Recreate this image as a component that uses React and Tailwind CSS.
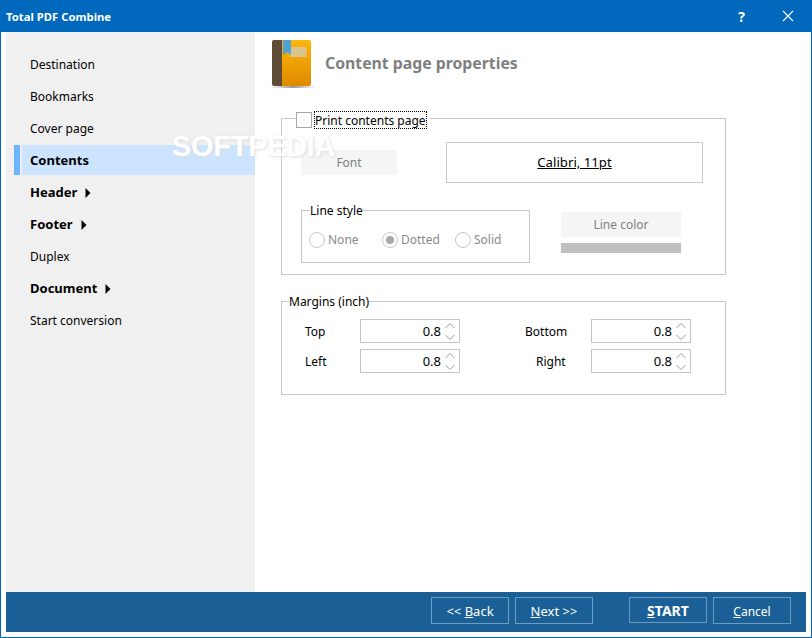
const nav = [
  { t: "Destination" },
  { t: "Bookmarks" },
  { t: "Cover page" },
  { t: "Contents", b: true, sel: true },
  { t: "Header", b: true, arrow: true },
  { t: "Footer", b: true, arrow: true },
  { t: "Duplex" },
  { t: "Document", b: true, arrow: true },
  { t: "Start conversion" },
];

function NavItem({ t, b, sel, arrow }) {
  return (
    <div className="h-8 flex items-center">
      <div className={sel ? "w-[6px] h-[30px] bg-[#6db5ff] mr-[2px] ml-[8px]" : "w-[16px]"} />
      <div className={`flex-1 h-[30px] flex items-center pl-2 pt-px ${sel ? "bg-[#cce4ff]" : ""} ${b ? "font-bold text-[13px]" : ""}`}>
        <span>{t}</span>
        {arrow && (
          <svg width="6" height="10" viewBox="0 0 6 10" className="ml-2">
            <path d="M0.5 0 L5.5 5 L0.5 10 Z" fill="#000" />
          </svg>
        )}
      </div>
    </div>
  );
}

function Radio({ label, on, className }) {
  return (
    <div className={`flex items-center gap-[3px] text-[#8a8a8a] ${className || ""}`}>
      <div className="w-4 h-4 rounded-full border border-[#c8c8c8] bg-white flex items-center justify-center">
        {on && <div className="w-2 h-2 rounded-full bg-[#a8a8a8]" />}
      </div>
      <span className="pt-px">{label}</span>
    </div>
  );
}

function Spin({ className }) {
  return (
    <div className={`w-[100px] h-6 border border-[#c4c4c4] bg-white flex items-center justify-end ${className || ""}`}>
      <span className="mr-[3px] pt-px text-[13px]">0.8</span>
      <svg width="12" height="22" viewBox="0 0 12 22" className="mr-[3px]">
        <path d="M1.5 8 L6 3.5 L10.5 8" fill="none" stroke="#9a9a9a" strokeWidth="1" />
        <path d="M1.5 15 L6 19.5 L10.5 15" fill="none" stroke="#9a9a9a" strokeWidth="1" />
      </svg>
    </div>
  );
}

function BookIcon() {
  return (
    <svg width="48" height="50" viewBox="0 0 48 50" className="block">
      <defs>
        <linearGradient id="g" x1="0" y1="0" x2="0" y2="1">
          <stop offset="0" stopColor="#fdb70a" />
          <stop offset="1" stopColor="#de8a00" />
        </linearGradient>
        <linearGradient id="s" x1="0" y1="0" x2="1" y2="0">
          <stop offset="0" stopColor="#00000000" />
          <stop offset="0.5" stopColor="#00000066" />
          <stop offset="1" stopColor="#00000000" />
        </linearGradient>
      </defs>
      <rect x="0" y="46" width="46" height="2" fill="url(#s)" />
      <path d="M4 0 H12 V46 H4 Q2 46 2 44 V2 Q2 0 4 0 Z" fill="#5e4c35" />
      <path d="M12 0 H39 Q41 0 41 2 V44 Q41 46 39 46 H12 Z" fill="url(#g)" />
      <path d="M13 0 H21 V15 L17 12 L13 15 Z" fill="#4da3d6" />
      <path d="M21 7 H35 Q36.500 7 36.500 8.500 V17 H19 L21 14 Z" fill="#dcc48e" />
    </svg>
  );
}

const FooterBtn = ({ children, className }) => (
  <div className={`w-[78px] border border-[#6c9cc0] flex items-center justify-center text-white ${className || ""}`}>
    {children}
  </div>
);

export default function App() {
  return (
    <div className="relative w-[812px] h-[638px] flex flex-col bg-white overflow-hidden border-x border-b border-[#0069bd] text-[12px] text-black font-['Noto_Sans',sans-serif]">
      <div className="h-8 -mx-px bg-[#0069bd] flex items-center text-white shrink-0">
        <span className="ml-[6px] pt-[3px] font-bold text-[11.3px]">Total PDF Combine</span>
        <span className="ml-auto mr-[37px] font-bold text-[14px]">?</span>
        <svg width="12" height="12" viewBox="0 0 12 12" className="mr-[18px]">
          <path d="M1 1 L11 11 M11 1 L1 11" stroke="#fff" strokeWidth="1.2" />
        </svg>
      </div>

      <div className="flex-1 flex pl-[5px] min-h-0">
        <div className="w-[249px] bg-[#f0f0f0] pt-4 shrink-0">
          {nav.map((n) => <NavItem key={n.t} {...n} />)}
        </div>
        <div className="flex-1 pl-[26px]">
          <div className="h-[78px] flex items-start pt-2 -ml-[11px]">
            <BookIcon />
            <span className="ml-[7px] mt-[12px] text-[15.8px] font-bold text-[#7f7f7f]">Content page properties</span>
          </div>

          <fieldset className="w-[445px] h-[165px] border border-[#c8c8c8]">
            <legend className="ml-[14px] h-4 flex items-start pr-[3px]">
              <div className="w-4 h-4 mt-[2px] border border-[#a8a8a8] bg-white" />
              <span className="h-[18px] ml-[2px] mt-[1px] pt-px flex items-center border border-dotted border-black leading-none">Print contents page</span>
            </legend>
            <div className="px-[19px]">
              <div className="flex items-center mt-[16px]">
                <div className="w-24 h-[25px] pt-px bg-[#f5f5f5] text-[#808080] flex items-center justify-center">Font</div>
                <div className="ml-[49px] w-[257px] h-[41px] pt-px border border-[#c8c8c8] flex items-center justify-center underline text-[13.2px]">Calibri, 11pt</div>
              </div>
              <div className="flex mt-[19px]">
                <fieldset className="w-[229px] h-[61px] border border-[#c8c8c8] px-[7px]">
                  <legend className="ml-[1px] leading-4 pt-px">Line style</legend>
                  <div className="flex items-center mt-[11px]">
                    <Radio label="None" className="w-[73px]" />
                    <Radio label="Dotted" on className="w-[73px]" />
                    <Radio label="Solid" />
                  </div>
                </fieldset>
                <div className="ml-[31px] w-[120px] mt-[10px]">
                  <div className="h-[25px] pt-px bg-[#f5f5f5] text-[#808080] flex items-center justify-center">Line color</div>
                  <div className="h-[10px] mt-[6px] bg-[#c0c0c0]" />
                </div>
              </div>
            </div>
          </fieldset>

          <fieldset className="w-[445px] h-[102px] mt-[18px] border border-[#c8c8c8]">
            <legend className="ml-[7px] leading-4 pt-px">Margins (inch)</legend>
            <div className="grid grid-cols-[55px_100px_131px_100px] gap-y-[6px] pl-[23px] mt-[9px] items-center">
              <span className="pt-px">Top</span>
              <Spin />
              <span className="pl-[65px] pt-px">Bottom</span>
              <Spin />
              <span className="pt-px">Left</span>
              <Spin />
              <span className="pl-[76px] pt-px">Right</span>
              <Spin />
            </div>
          </fieldset>
        </div>
      </div>

      <div className="h-10 ml-[5px] mr-[5px] mb-[5px] bg-[#1a6096] flex items-start pt-[5px] pl-[425px] shrink-0">
        <FooterBtn className="h-[27px] pt-[2px] text-[13px]"><span>&lt;&lt; <u>B</u>ack</span></FooterBtn>
        <FooterBtn className="h-[27px] pt-[2px] ml-[6px] text-[13px]"><span><u>N</u>ext &gt;&gt;</span></FooterBtn>
        <FooterBtn className="h-[26px] ml-9 font-bold text-[14px]"><span><u>S</u>TART</span></FooterBtn>
        <FooterBtn className="h-[27px] pt-[2px] ml-[6px]"><span><u>C</u>ancel</span></FooterBtn>
      </div>

      <div className="absolute left-[171px] top-[132px] text-[29px] leading-[29px] font-bold text-white tracking-[-0.3px] font-['Liberation_Sans',sans-serif] [text-shadow:1px_1px_3px_#dcdcdc] pointer-events-none">
        SOFTPEDIA
      </div>
      <div className="absolute left-[335px] top-[128px] text-[8px] leading-[10px] text-white [text-shadow:0_0_2px_#d4d4d4] pointer-events-none">®</div>
    </div>
  );
}
